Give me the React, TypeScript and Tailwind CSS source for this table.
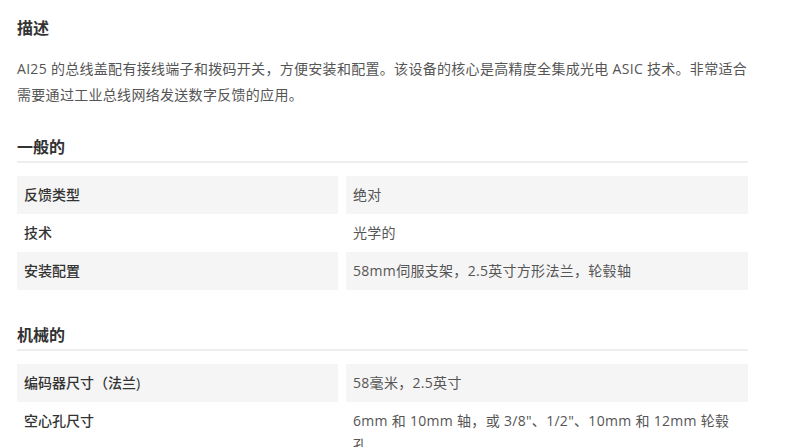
import React from "react";

type Row = { k: string; v: string };

function Heading({ children }: { children: React.ReactNode }) {
  return (
    <h2 className="text-[16px] leading-[24px] font-bold text-[#333333] pb-[2px] border-b-2 border-[#eeeeee]">
      {children}
    </h2>
  );
}

function SpecTable({ rows }: { rows: Row[] }) {
  return (
    <div className="grid grid-cols-[321px_402px] gap-x-2">
      {rows.map((r, i) => (
        <React.Fragment key={r.k}>
          <div
            className={`px-[7px] py-[7px] text-[14px] leading-[24px] font-medium text-[#333333] ${
              i % 2 === 0 ? "bg-[#f5f5f5]" : "bg-white"
            }`}
          >
            {r.k}
          </div>
          <div
            className={`px-[7px] py-[7px] text-[14px] leading-[24px] tracking-[0.3px] text-[#555555] ${
              i % 2 === 0 ? "bg-[#f5f5f5]" : "bg-white"
            }`}
          >
            {r.v}
          </div>
        </React.Fragment>
      ))}
    </div>
  );
}

export default function App() {
  const general: Row[] = [
    { k: "反馈类型", v: "绝对" },
    { k: "技术", v: "光学的" },
    { k: "安装配置", v: "58mm伺服支架，2.5英寸方形法兰，轮毂轴" },
  ];
  const mech: Row[] = [
    { k: "编码器尺寸（法兰)", v: "58毫米，2.5英寸" },
    { k: "空心孔尺寸", v: "6mm 和 10mm 轴，或 3/8\"、1/2\"、10mm 和 12mm 轮毂孔" },
  ];
  return (
    <div className="w-[800px] h-[447px] overflow-hidden bg-white font-['Open_Sans','Noto_Sans_CJK_SC',sans-serif]">
      <div className="w-[731px] ml-[17px] pt-[16px]">
        <h2 className="text-[16px] leading-[24px] font-bold text-[#333333]">描述</h2>
        <p className="mt-[16px] text-[14px] leading-[26px] tracking-[0.3px] text-[#555555]">
          AI25 的总线盖配有接线端子和拨码开关，方便安装和配置。该设备的核心是高精度全集成光电 ASIC 技术。非常适合需要通过工业总线网络发送数字反馈的应用。
        </p>
        <div className="mt-[27px]">
          <Heading>一般的</Heading>
        </div>
        <div className="mt-[13px]">
          <SpecTable rows={general} />
        </div>
        <div className="mt-[33px]">
          <Heading>机械的</Heading>
        </div>
        <div className="mt-[13px]">
          <SpecTable rows={mech} />
        </div>
      </div>
    </div>
  );
}
